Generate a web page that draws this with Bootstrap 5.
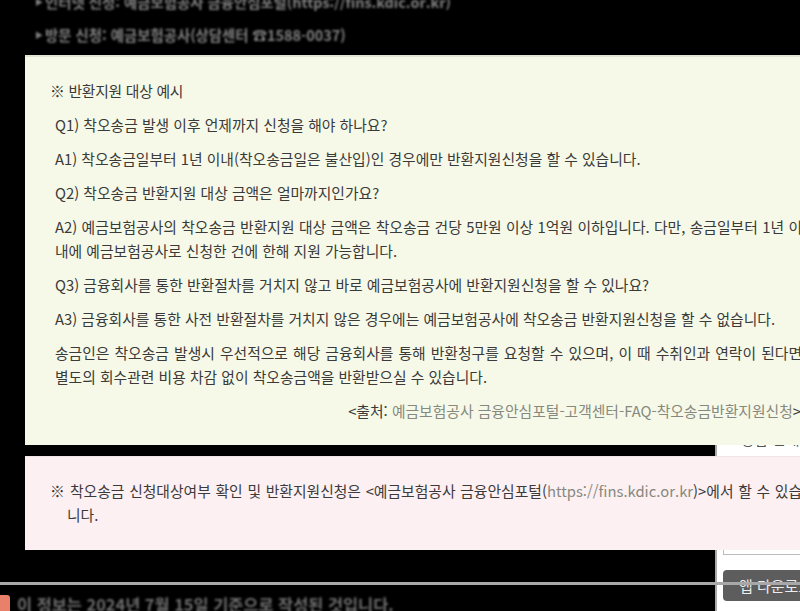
<!DOCTYPE html>
<html lang="ko">
<head>
<meta charset="utf-8">
<title>착오송금 반환지원</title>
<link rel="stylesheet" href="https://cdn.jsdelivr.net/npm/bootstrap@5.3.0/dist/css/bootstrap.min.css">
<style>
html,body{height:611px;overflow:hidden;background:#000;}
body{font-family:"Noto Sans CJK KR","Noto Sans",sans-serif;font-size:14.8px;color:#3a3a3a;}
.page-grid{display:grid;grid-template-columns:715px 85px;height:611px;}
.main-col{min-width:0;}
.side-col{background:#fff;margin-top:55px;border-left:2px solid #aaa;}
.blur-line{filter:blur(1.3px);font-weight:700;color:#808080;font-size:14.4px;white-space:nowrap;line-height:20px;padding-left:35px;display:flex;align-items:center;gap:2px;}
.tri-mark{font-size:8px;line-height:20px;}
.blur-first{margin-top:-8px;}
.blur-second{margin-top:13px;}
.note-box{position:relative;z-index:1;width:900px;margin-left:25px;line-height:24px;}
.note-green{margin-top:10px;height:390px;background:#f6f9e8;border-top:2px solid #e3e5d3;padding:22px 0 0 26px;}
.note-pink{margin-top:11px;height:94px;background:#fdf0f2;border-top:1px solid #f0e6e8;padding:22px 0 0 26px;}
.note-green p{margin:0 0 10px 4px;width:747px;text-align:justify;}
.note-green p.head{margin:0 0 10px -1px;letter-spacing:-.25px;}
.note-green p.src{margin-top:9px;text-align:right;width:746px;white-space:nowrap;}
.muted-src{color:#86897f;}
.pink-line{margin:0 0 0 -1px;width:752px;padding-left:17px;text-indent:-17px;text-align:justify;}
.rule-line{position:absolute;left:0;top:582px;width:800px;height:3px;background:#a8a8a8;z-index:3;}
.foot-row{position:absolute;left:0;top:594px;z-index:2;display:flex;align-items:flex-start;gap:7px;}
.foot-mark{width:10px;height:17px;margin-top:1px;background:#e8806a;border-radius:0 3px 0 0;}
.foot-text{filter:blur(1.3px);font-weight:700;color:#6e6e6e;font-size:16.4px;line-height:20px;white-space:nowrap;}
.fake-input{position:absolute;left:723px;top:540px;width:100px;height:15px;border:1px solid #bbb;border-top:0;background:#fff;}
.app-btn{position:absolute;left:723px;top:570px;width:110px;height:31px;background:#5d5d5d;color:#eee;border:0;border-radius:4px;font-size:15px;line-height:31px;padding:0 0 0 16px;text-align:left;white-space:nowrap;z-index:2;}
.side-peek{position:absolute;left:741px;top:429px;color:#555;line-height:20px;white-space:nowrap;}
</style>
</head>
<body>
<div class="page-grid">
  <main class="main-col">
    <div class="blur-line blur-first"><span class="tri-mark">▶</span><span>인터넷 신청: 예금보험공사 금융안심포털(https://fins.kdic.or.kr)</span></div>
    <div class="blur-line blur-second"><span class="tri-mark">▶</span><span>방문 신청: 예금보험공사(상담센터 ☎1588-0037)</span></div>
    <section class="note-box note-green">
      <p class="head">※ 반환지원 대상 예시</p>
      <p>Q1) 착오송금 발생 이후 언제까지 신청을 해야 하나요?</p>
      <p>A1) 착오송금일부터 1년 이내(착오송금일은 불산입)인 경우에만 반환지원신청을 할 수 있습니다.</p>
      <p>Q2) 착오송금 반환지원 대상 금액은 얼마까지인가요?</p>
      <p>A2) 예금보험공사의 착오송금 반환지원 대상 금액은 착오송금 건당 5만원 이상 1억원 이하입니다. 다만, 송금일부터 1년 이내에 예금보험공사로 신청한 건에 한해 지원 가능합니다.</p>
      <p>Q3) 금융회사를 통한 반환절차를 거치지 않고 바로 예금보험공사에 반환지원신청을 할 수 있나요?</p>
      <p>A3) 금융회사를 통한 사전 반환절차를 거치지 않은 경우에는 예금보험공사에 착오송금 반환지원신청을 할 수 없습니다.</p>
      <p>송금인은 착오송금 발생시 우선적으로 해당 금융회사를 통해 반환청구를 요청할 수 있으며, 이 때 수취인과 연락이 된다면 별도의 회수관련 비용 차감 없이 착오송금액을 반환받으실 수 있습니다.</p>
      <p class="src">&lt;출처: <span class="muted-src">예금보험공사 금융안심포털-고객센터-FAQ-착오송금반환지원신청</span>&gt;</p>
    </section>
    <section class="note-box note-pink">
      <p class="pink-line">※ 착오송금 신청대상여부 확인 및 반환지원신청은 &lt;예금보험공사 금융안심포털(<span class="muted-src">https://fins.kdic.or.kr</span>)&gt;에서 할 수 있습니다.</p>
    </section>
  </main>
  <aside class="side-col"></aside>
</div>
<div class="side-peek">상담 안내</div>
<div class="fake-input"></div>
<button type="button" class="app-btn">앱 다운로드</button>
<div class="rule-line"></div>
<div class="foot-row"><span class="foot-mark"></span><span class="foot-text">이 정보는 2024년 7월 15일 기준으로 작성된 것입니다.</span></div>
<script src="https://cdn.jsdelivr.net/npm/bootstrap@5.3.0/dist/js/bootstrap.bundle.min.js"></script>
</body>
</html>
